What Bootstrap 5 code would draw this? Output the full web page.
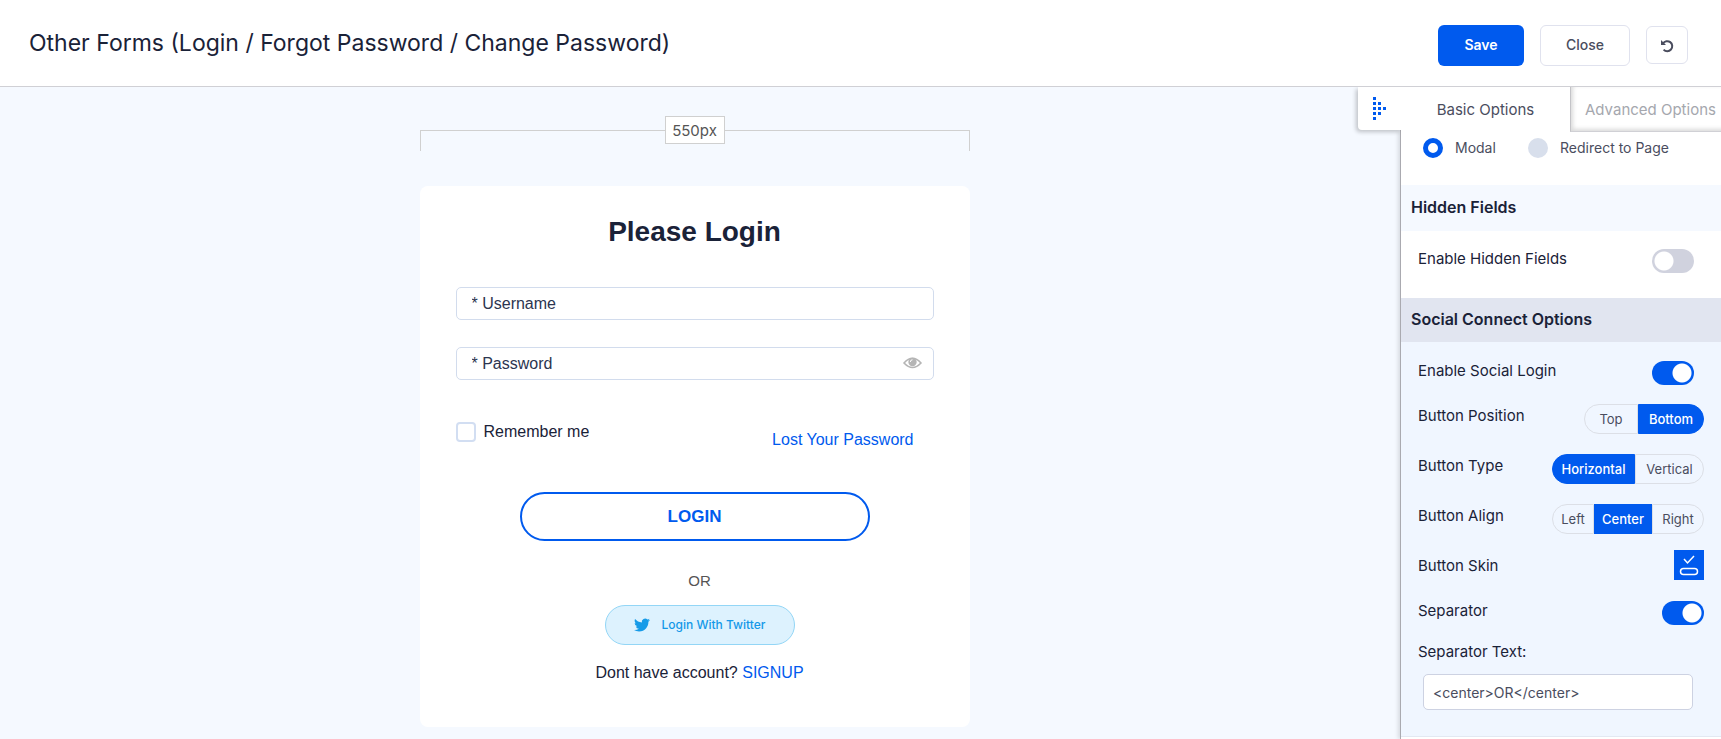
<!DOCTYPE html>
<html lang="en">
<head>
<meta charset="utf-8">
<meta name="viewport" content="width=device-width, initial-scale=1">
<title>Other Forms</title>
<link href="https://cdn.jsdelivr.net/npm/bootstrap@5.3.0/dist/css/bootstrap.min.css" rel="stylesheet">
<style>
:root{--brand:#005aee;--ink:#1a2238;--muted-ink:#4a4d5e}
body{font-family:Inter,"Open Sans",sans-serif;color:var(--ink);font-size:14px;min-height:100vh}
.topbar{background:#fff;border-bottom:1px solid #d0d0d5;min-height:87px;padding:0 33px 0 29px}
.topbar h1{font-size:23px;line-height:36px;font-weight:400;margin:0}
.topbar .actions{padding-top:4px;gap:16px}
.topbar .btn{font-size:14px;font-weight:500;border-radius:6px;line-height:20px;padding:0;height:41px}
.btn-save{background:var(--brand);color:#fff;width:86px}
.topbar .btn-save{font-weight:600}
.btn-plain{border:1px solid #e0e2ee;color:var(--muted-ink);background:#fff;width:90px}
.topbar .btn-undo{width:42px;height:38px}
.workspace{background:#f5f9ff}
.canvas{padding:29px 11px 12px 0}
.form-col{width:550px;max-width:100%}
.ruler{height:35px;margin-bottom:35px;position:relative}
.ruler-line{border:1px solid #d0d0d0;border-bottom:0;height:21px;margin-top:14px;width:100%}
.ruler output{position:absolute;top:0;left:50%;transform:translateX(-50%);background:#fff;border:1px solid #d0d0d0;width:60px;height:28px;line-height:28px;text-align:center;font-size:15px;color:#555}
.login-card{background:#fff;border-radius:8px;padding:26px 36px 42px;font-family:"Liberation Sans",Arial,sans-serif;font-size:16px;line-height:24px}
.login-card h2{font-size:28px;line-height:40px;font-weight:700;margin:0 0 35px;text-align:center}
.login-card .form-control{height:33px;border:1px solid #d2dced;border-radius:5px;padding:0 15px;font-size:16px;color:var(--ink)}
.login-card .form-control::placeholder{color:#2c3550;opacity:1}
.pass-field{margin-top:27px}
.eye{position:absolute;right:12px;top:8px;padding:0;border:0;background:none;line-height:0}
.login-card .form-check-input{width:20px;height:20px;margin:0;border:2px solid #d2def2;border-radius:4px}
a{color:var(--brand);text-decoration:none}
.btn-login{width:350px;height:49px;border:2px solid var(--brand);border-radius:25px;color:var(--brand);font-weight:700;font-size:17px;padding:0;background:#fff}
.offset-block{padding-left:10px}
.sep-or{font-size:15px;color:#555}
.btn-twitter{width:190px;height:40px;border:1px solid #93d6f6;border-radius:20px;background:#ddf2fe;color:#1398e8;font:500 12px/20px Inter,sans-serif;gap:12px}
.sidepanel{width:321px;border-left:1px solid #aaaab0;box-shadow:-2px 0 4px rgba(0,0,0,.12);background:#fff;position:relative;clip-path:inset(0 0 0 -60px)}
.panel-toggle{position:absolute;left:-43px;top:0;width:43px;height:43px;background:#fff;border:0;border-radius:0 0 0 4px;box-shadow:-2px 2px 4px rgba(0,0,0,.22);clip-path:inset(0 0 -6px -6px);padding:0}
.tabs{overflow:hidden;height:45px}
.tabs .nav-link{font-size:15px;line-height:22px;padding:12px 0 11px;white-space:nowrap;color:var(--muted-ink)}
.tab-basic{width:169px;flex:none;text-align:center}
.tabs .tab-adv{color:#a5a7ae;flex:none;width:170px;padding-left:14px;box-shadow:inset 2px -2px 4px rgba(0,0,0,.15);border-left:1px solid #c4c4c8;border-bottom:1px solid #d0d0d5}
.modes{padding:6px 22px 27px;height:53px}
.modes div{gap:12px}
.modes .mode-first{width:105px}
.modes label{font-size:14px;line-height:20px;color:var(--muted-ink)}
.modes .form-check-input{width:20px;height:20px;margin:0;border:0;background:#d8dfec;flex:none}
.modes .form-check-input:checked{background:#fff;border:5px solid var(--brand)}
.panel-head{font-size:16px;font-weight:600;line-height:24px;padding:10px;margin:0}
.panel-head.hidden-head{background:#f5f9ff;height:46px}
.panel-head.social-head{background:#e1e5f0;height:44px;padding-top:9px}
.hidden-body{height:67px;padding:17px 27px 0 17px}
.social-body{background:#f0f6ff;padding:18px 17px 26px;border-bottom:1px solid #e3e8f2}
.opt{font-size:15px;line-height:22px}
.opt-row{display:flex;justify-content:space-between;align-items:flex-start}
.opt-row .form-check-input{width:42px;height:24px;border:0;margin:1px 0 0;background-color:#d0d2de;border-radius:12px;background-size:24px 24px;background-image:radial-gradient(circle,#fff 9px,transparent 10px);background-position:0 center}
.opt-row .form-check-input:checked{background-color:var(--brand);background-image:radial-gradient(circle,#fff 9px,transparent 10px);background-position:right center}
.row-login{height:45px;padding-right:10px}
.row-seg{height:50px}
.row-skin{height:45px}
.row-sep{height:41px}
.seg{margin-top:-1px}
.seg .btn{height:30px;border:1px solid #dcdfe6;font-size:13px;line-height:28px;padding:0;color:var(--muted-ink);border-radius:0}
.seg .btn:first-of-type{border-radius:15px 0 0 15px}
.seg .btn:last-of-type{border-radius:0 15px 15px 0}
.seg .btn-check:checked+.btn{background:var(--brand);border-color:var(--brand);color:#fff;font-weight:500}
.w-top{width:54px}.w-bottom{width:66px}.w-hor{width:83px}.w-ver{width:69px}.w-left{width:42px}.w-center{width:58px}.w-right{width:52px}
.skin{width:30px;height:30px;margin-top:-5px;background:var(--brand);border:0;padding:0;line-height:0}
.sep-input{margin:11px 11px 0 5px}
.sep-input .form-control{height:36px;border:1px solid #cdd2e2;border-radius:5px;font-size:14px;padding:0 9px;color:var(--muted-ink)}
</style>
</head>
<body class="d-flex flex-column">
<header class="topbar d-flex align-items-center justify-content-between">
  <h1>Other Forms (Login / Forgot Password / Change Password)</h1>
  <div class="actions d-flex align-items-center">
    <button class="btn btn-save" type="button">Save</button>
    <button class="btn btn-plain" type="button">Close</button>
    <button class="btn btn-plain btn-undo" type="button" aria-label="Reset"><svg width="14" height="14" viewBox="0 0 14 14"><path d="M3 4.500A5 5 0 1 1 3.600 10.600" fill="none" stroke="#4a4d5e" stroke-width="2"/><path d="M1 1v5h5z" fill="#4a4d5e"/></svg></button>
  </div>
</header>
<div class="workspace d-flex flex-grow-1">
  <main class="canvas flex-grow-1 d-flex justify-content-center align-items-start">
    <div class="form-col">
      <div class="ruler d-flex align-items-start"><div class="ruler-line"></div><output>550px</output></div>
      <form class="login-card">
        <h2>Please Login</h2>
        <input class="form-control" type="text" placeholder="* Username" aria-label="Username">
        <div class="pass-field position-relative">
          <input class="form-control" type="password" placeholder="* Password" aria-label="Password">
          <button class="eye" type="button" aria-label="Show password"><svg width="19" height="16" viewBox="0 0 19 16"><path d="M1 8Q9.500-1.500 18 8Q9.500 17 1 8Z" fill="none" stroke="#b5b5b5" stroke-width="1.600"/><circle cx="9.500" cy="7" r="4.200" fill="#b5b5b5"/><path d="M7.300 7a2.200 2.200 0 0 1 2.200-2.200" fill="none" stroke="#fff"/></svg></button>
        </div>
        <div class="d-flex justify-content-between align-items-start mt-4 pt-3">
          <div class="d-flex gap-2 align-items-center"><input class="form-check-input" type="checkbox" id="remember"><label for="remember">Remember me</label></div>
          <a href="#" class="mt-2 me-3 pe-1">Lost Your Password</a>
        </div>
        <div class="text-center pt-3 mt-4"><button class="btn btn-login" type="submit">LOGIN</button></div>
        <div class="offset-block text-center">
          <div class="sep-or pt-4 mt-1 mb-2 pb-1">OR</div>
          <button class="btn btn-twitter d-inline-flex align-items-center justify-content-center" type="button"><svg width="16" height="16" viewBox="0 0 24 24" fill="#169be8"><path d="M23.950 4.570a10 10 0 0 1-2.820.780 4.960 4.960 0 0 0 2.160-2.730c-.950.560-2 .960-3.130 1.190a4.920 4.920 0 0 0-8.380 4.480C7.690 8.100 4.070 6.130 1.640 3.160a4.820 4.820 0 0 0-.660 2.480c0 1.710.870 3.210 2.190 4.100a4.900 4.900 0 0 1-2.230-.620v.060a4.920 4.920 0 0 0 3.950 4.830 5 5 0 0 1-2.210.080 4.940 4.940 0 0 0 4.600 3.420A9.870 9.870 0 0 1 0 19.540a14 14 0 0 0 7.550 2.210c9.050 0 14-7.500 14-13.980 0-.210 0-.420-.020-.630a9.940 9.940 0 0 0 2.420-2.570z"/></svg>Login With Twitter</button>
          <div class="pt-3">Dont have account? <a href="#">SIGNUP</a></div>
        </div>
      </form>
    </div>
  </main>
  <aside class="sidepanel flex-shrink-0">
    <button class="panel-toggle" type="button" aria-label="Collapse panel"><svg width="13" height="23" viewBox="0 0 13 23" fill="#005aee"><path d="M0 0h3v3H0zM0 5h3v3H0zM5 5h3v3H5zM0 10h3v3H0zM5 10h3v3H5zM10 10h3v3h-3zM0 15h3v3H0zM5 15h3v3H5zM0 20h3v3H0z"/></svg></button>
    <nav class="tabs d-flex align-items-stretch">
      <a class="nav-link tab-basic" href="#">Basic Options</a><a class="nav-link tab-adv" href="#">Advanced Options</a>
    </nav>
    <div class="modes d-flex">
      <div class="mode-first d-flex"><input class="form-check-input" type="radio" name="mode" id="m1" checked><label for="m1">Modal</label></div>
      <div class="d-flex"><input class="form-check-input" type="radio" name="mode" id="m2"><label for="m2">Redirect to Page</label></div>
    </div>
    <h3 class="panel-head hidden-head">Hidden Fields</h3>
    <div class="hidden-body opt-row"><label class="opt" for="s1">Enable Hidden Fields</label><input class="form-check-input" type="checkbox" role="switch" id="s1"></div>
    <h3 class="panel-head social-head">Social Connect Options</h3>
    <div class="social-body">
      <div class="opt-row row-login"><label class="opt" for="s2">Enable Social Login</label><input class="form-check-input" type="checkbox" role="switch" id="s2" checked></div>
      <div class="opt-row row-seg"><span class="opt">Button Position</span><div class="seg d-flex">
        <input class="btn-check" type="radio" name="pos" id="p1"><label class="btn w-top" for="p1">Top</label><input class="btn-check" type="radio" name="pos" id="p2" checked><label class="btn w-bottom" for="p2">Bottom</label></div></div>
      <div class="opt-row row-seg"><span class="opt">Button Type</span><div class="seg d-flex">
        <input class="btn-check" type="radio" name="type" id="t1" checked><label class="btn w-hor" for="t1">Horizontal</label><input class="btn-check" type="radio" name="type" id="t2"><label class="btn w-ver" for="t2">Vertical</label></div></div>
      <div class="opt-row row-seg"><span class="opt">Button Align</span><div class="seg d-flex">
        <input class="btn-check" type="radio" name="al" id="a1"><label class="btn w-left" for="a1">Left</label><input class="btn-check" type="radio" name="al" id="a2" checked><label class="btn w-center" for="a2">Center</label><input class="btn-check" type="radio" name="al" id="a3"><label class="btn w-right" for="a3">Right</label></div></div>
      <div class="opt-row row-skin"><span class="opt">Button Skin</span><button class="skin" type="button" aria-label="Button skin"><svg width="20" height="22" viewBox="0 0 20 22" fill="none" stroke="#fff" stroke-width="1.500"><path d="M5 5l3.500 4L15 2"/><rect x="1.500" y="14.500" width="17" height="6" rx="3"/></svg></button></div>
      <div class="opt-row row-sep"><label class="opt" for="s3">Separator</label><input class="form-check-input" type="checkbox" role="switch" id="s3" checked></div>
      <label class="opt d-block" for="st">Separator Text:</label>
      <div class="sep-input"><input class="form-control" type="text" id="st" value="&lt;center&gt;OR&lt;/center&gt;"></div>
    </div>
  </aside>
</div>
<script src="https://cdn.jsdelivr.net/npm/bootstrap@5.3.0/dist/js/bootstrap.bundle.min.js"></script>
</body>
</html>
